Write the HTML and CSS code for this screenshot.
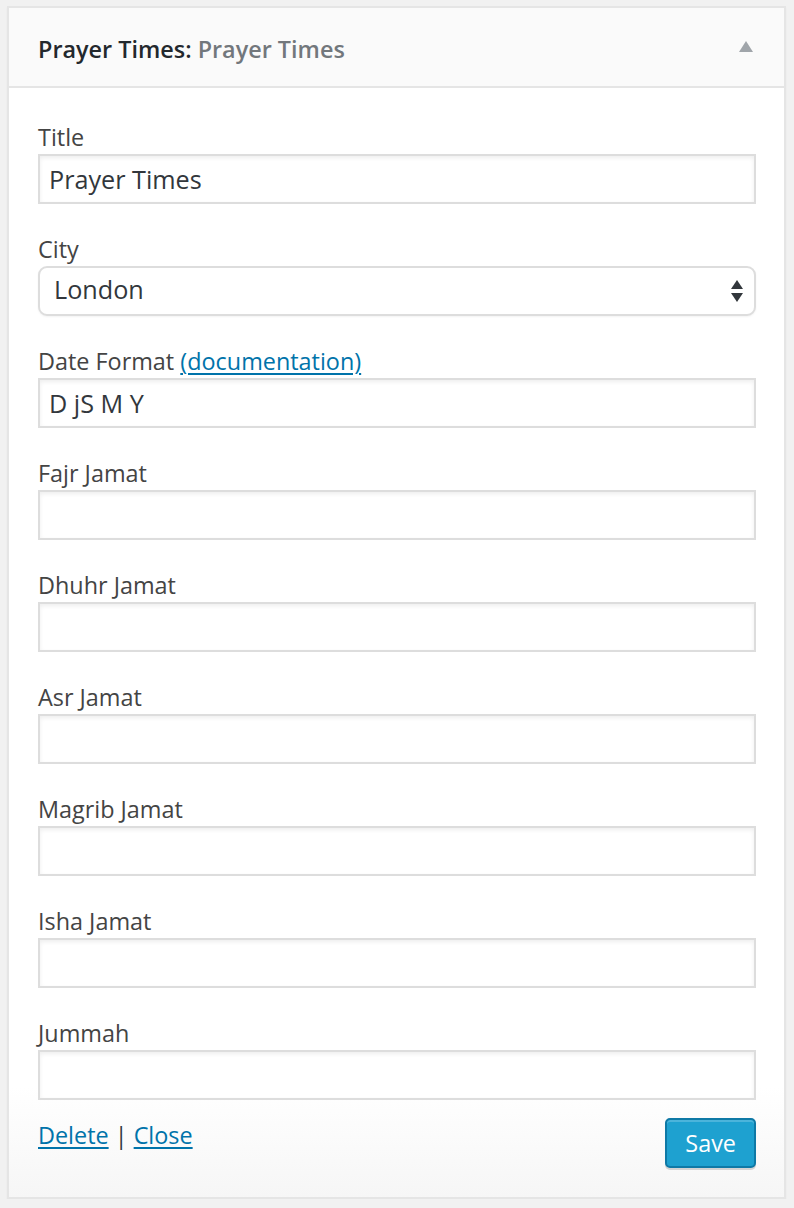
FILE: index.html
```html
<!DOCTYPE html>
<html lang="en">
<head>
<meta charset="utf-8">
<title>Prayer Times widget</title>
<link rel="stylesheet" href="styles.css">
</head>
<body>
<div class="widget">
  <div class="widget-top">
    <h3 class="widget-title">Prayer Times<span class="colon">:</span> <span class="in-title">Prayer Times</span></h3>
    <svg class="toggle" width="14" height="11" viewBox="0 0 14 11"><polygon points="7,0 14,11 0,11" fill="#a0a5aa"/></svg>
  </div>
  <div class="widget-inside">
    <div class="fields">
      <p class="field"><label>Title</label><input class="text" type="text" value="Prayer Times"></p>
      <p class="field"><label>City</label>
        <span class="select-wrap">
          <select class="select"><option>London</option></select>
          <svg class="arrows" width="12" height="22" viewBox="0 0 12 22"><polygon points="6,0 12,9 0,9" fill="#32373c"/><polygon points="0,13 12,13 6,22" fill="#32373c"/></svg>
        </span>
      </p>
      <p class="field"><label>Date Format <a href="#">(documentation)</a></label><input class="text" type="text" value="D jS M Y"></p>
      <p class="field"><label>Fajr Jamat</label><input class="text" type="text"></p>
      <p class="field"><label>Dhuhr Jamat</label><input class="text" type="text"></p>
      <p class="field"><label>Asr Jamat</label><input class="text" type="text"></p>
      <p class="field"><label>Magrib Jamat</label><input class="text" type="text"></p>
      <p class="field"><label>Isha Jamat</label><input class="text" type="text"></p>
      <p class="field last"><label>Jummah</label><input class="text" type="text"></p>
    </div>
    <div class="actions">
      <div class="links"><a href="#">Delete</a> <span class="sep">|</span> <a href="#">Close</a></div>
      <button class="save" type="button">Save</button>
    </div>
  </div>
</div>
</body>
</html>
```
FILE: styles.css
```css
html, body {
  margin: 0;
  padding: 0;
  background: #f1f1f1;
}
body {
  font-family: "Open Sans", "Noto Sans", sans-serif;
  color: #444;
  font-size: 23.4px;
}
.widget {
  margin: 6px 0 0 7px;
  width: 779px;
  box-sizing: border-box;
  border: 2px solid #e5e5e5;
  background: #fff;
  box-shadow: 0 2px 2px rgba(0,0,0,.04);
}
.widget-top {
  height: 78px;
  background: #fafafa;
  border-bottom: 2px solid #e5e5e5;
  display: flex;
  align-items: center;
  justify-content: space-between;
  padding: 0 31px 0 29px;
}
.widget-title {
  margin: 4px 0 0;
  font-size: 23.4px;
  font-weight: 600;
  line-height: 36px;
  color: #23282d;
}
.in-title {
  color: #72777c;
}
.toggle {
  display: block;
  margin-top: -2px;
}
.widget-inside {
  padding: 30px 28px 29px 29px;
  background: linear-gradient(to bottom, #fff 0, #fff calc(100% - 110px), #f6f6f6 100%);
}
.fields {
  display: flex;
  flex-direction: column;
}
.field {
  margin: 0 0 26px;
  display: flex;
  flex-direction: column;
}
.field.last {
  margin-bottom: 18px;
}
.field label {
  line-height: 38px;
  height: 36px;
  margin-top: 0;
  color: #444;
}
a {
  color: #0073aa;
  text-decoration: underline;
  text-decoration-thickness: 2px;
  text-underline-offset: 3px;
}
.text {
  display: block;
  box-sizing: border-box;
  width: 100%;
  height: 50px;
  margin: 0;
  border: 2px solid #ddd;
  border-radius: 0;
  padding: 0 9px;
  font-family: "Open Sans", "Noto Sans", sans-serif;
  font-size: 25.2px;
  color: #32373c;
  background: #fff;
  box-shadow: inset 0 2px 4px rgba(0,0,0,.07);
  outline: none;
}
.select-wrap {
  position: relative;
  display: block;
}
.select {
  display: block;
  box-sizing: border-box;
  width: 100%;
  height: 50px;
  margin: 0;
  border: 2px solid #ddd;
  border-radius: 9px;
  padding: 0 14px 5px;
  font-family: "Open Sans", "Noto Sans", sans-serif;
  font-size: 25.2px;
  color: #32373c;
  background: #fff;
  -webkit-appearance: none;
  appearance: none;
  box-shadow: 0 1px 2px rgba(0,0,0,.05);
}
.arrows {
  position: absolute;
  right: 13px;
  top: 14px;
}
.actions {
  display: flex;
  justify-content: space-between;
  align-items: flex-start;
}
.links {
  line-height: 36px;
  margin-top: -1px;
  color: #32373c;
}
.sep {
  margin: 0;
}
.save {
  box-sizing: border-box;
  height: 50px;
  padding: 0 18px;
  font-family: "Open Sans", "Noto Sans", sans-serif;
  font-size: 23.4px;
  color: #fff;
  background: #1ea1d0;
  border: 2px solid #0e79a6;
  border-radius: 5px;
  box-shadow: inset 0 2px 0 rgba(120,200,230,.5), 0 2px 0 rgba(0,0,0,.15);
  cursor: pointer;
}
```
